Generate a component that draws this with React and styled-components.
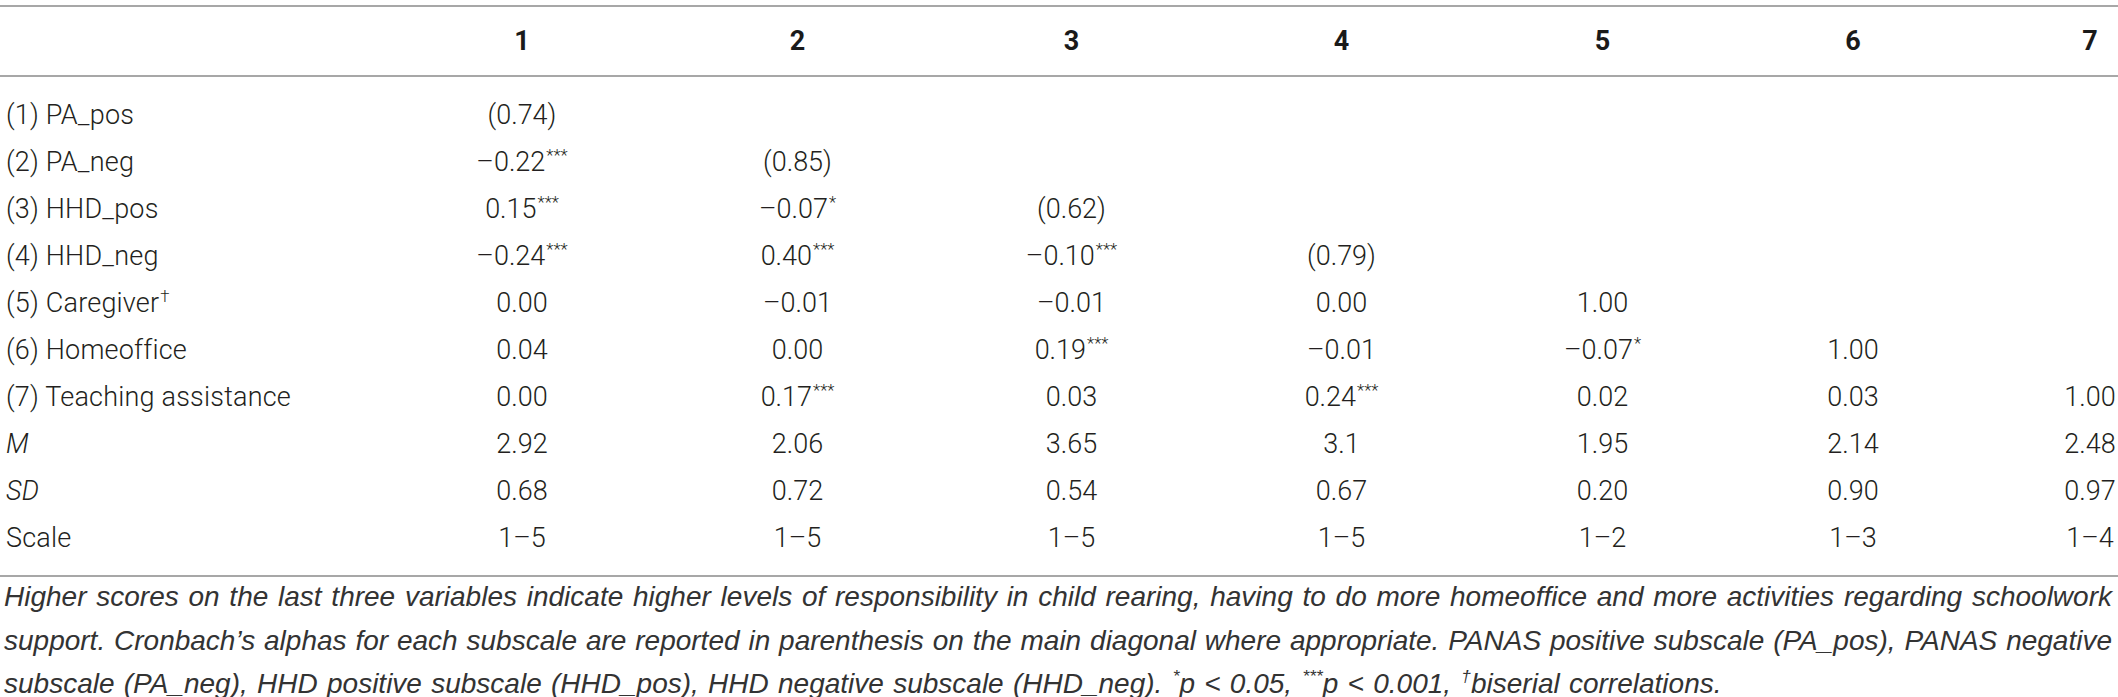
import React from 'react';
import styled, { createGlobalStyle } from 'styled-components';

const GlobalStyle = createGlobalStyle`
  html, body {
    margin: 0;
    padding: 0;
    background: #fff;
  }
  body {
    font-family: Roboto, "Liberation Sans", Arial, sans-serif;
    color: #231f20;
  }
`;

const widths = [384, 276, 275, 273, 267, 255, 246, 142];

const rows = [
  ['(1) PA_pos', ['(0.74)']],
  ['(2) PA_neg', ['–0.22***', '(0.85)']],
  ['(3) HHD_pos', ['0.15***', '–0.07*', '(0.62)']],
  ['(4) HHD_neg', ['–0.24***', '0.40***', '–0.10***', '(0.79)']],
  ['(5) Caregiver†', ['0.00', '–0.01', '–0.01', '0.00', '1.00']],
  ['(6) Homeoffice', ['0.04', '0.00', '0.19***', '–0.01', '–0.07*', '1.00']],
  ['(7) Teaching assistance', ['0.00', '0.17***', '0.03', '0.24***', '0.02', '0.03', '1.00']],
  ['M', ['2.92', '2.06', '3.65', '3.1', '1.95', '2.14', '2.48'], true],
  ['SD', ['0.68', '0.72', '0.54', '0.67', '0.20', '0.90', '0.97'], true],
  ['Scale', ['1–5', '1–5', '1–5', '1–5', '1–2', '1–3', '1–4']],
];

const Page = styled.div`
  width: 2118px;
  padding-top: 5px;
  overflow: hidden;
`;

const Table = styled.table`
  width: 2118px;
  table-layout: fixed;
  border-collapse: collapse;
  border-top: 2px solid #a7a7a7;
  border-bottom: 2px solid #a7a7a7;
  font-size: 27px;
`;

const HeadCell = styled.th`
  height: 68px;
  padding: 0 0 0 ${(p) => (p.$last ? '86px' : '0')};
  text-align: center;
  font-weight: 700;
  font-size: 27px;
  color: #1a1a1a;
  border-bottom: 2px solid #a7a7a7;
`;

const Row = styled.tr`
  &:first-child td {
    padding-top: 15px;
  }
  &:last-child td {
    padding-bottom: 13px;
  }
`;

const Label = styled.td`
  padding: 0 0 0 6px;
  line-height: 47px;
  text-align: left;
  font-weight: 300;
  letter-spacing: 0.2px;
  white-space: nowrap;
  font-style: ${(p) => (p.$italic ? 'italic' : 'normal')};
`;

const Value = styled.td`
  padding: 0 0 0 ${(p) => (p.$last ? '86px' : '0')};
  line-height: 47px;
  text-align: center;
  font-weight: 300;
  white-space: nowrap;
`;

const Sup = styled.sup`
  font-size: 0.62em;
  line-height: 0;
  vertical-align: 0;
  position: relative;
  top: -0.62em;
  margin-left: 1px;
`;

const Note = styled.div`
  margin-top: -2px;
  padding: 0 6px 0 4px;
  font-family: "Liberation Sans", Arial, sans-serif;
  font-size: 28px;
  font-style: italic;
  line-height: 43.5px;
  color: #333;
`;

const NoteLine = styled.div`
  white-space: nowrap;
  text-align: left;
  text-align-last: ${(p) => (p.$justify ? 'justify' : 'left')};
  word-spacing: ${(p) => (p.$justify ? '0' : '1.5px')};
`;

const Cell = ({ text }) => {
  const m = text.match(/^(.*?)(\*+|†)$/);
  if (!m) return text;
  return (
    <>
      {m[1]}
      <Sup>{m[2]}</Sup>
    </>
  );
};

export default function App() {
  return (
    <Page>
      <GlobalStyle />
      <Table>
        <colgroup>
          {widths.map((w, i) => (
            <col key={i} style={{ width: w }} />
          ))}
        </colgroup>
        <thead>
          <tr>
            <HeadCell />
            {[1, 2, 3, 4, 5, 6, 7].map((n) => (
              <HeadCell key={n} $last={n === 7}>
                {n}
              </HeadCell>
            ))}
          </tr>
        </thead>
        <tbody>
          {rows.map(([label, vals, italic]) => (
            <Row key={label}>
              <Label $italic={italic}>
                <Cell text={label} />
              </Label>
              {Array.from({ length: 7 }).map((_, i) => (
                <Value key={i} $last={i === 6}>
                  {vals[i] ? <Cell text={vals[i]} /> : null}
                </Value>
              ))}
            </Row>
          ))}
        </tbody>
      </Table>
      <Note>
        <NoteLine $justify>
          Higher scores on the last three variables indicate higher levels of responsibility in child rearing, having to do more homeoffice and more activities regarding schoolwork
        </NoteLine>
        <NoteLine $justify>
          support. Cronbach’s alphas for each subscale are reported in parenthesis on the main diagonal where appropriate. PANAS positive subscale (PA_pos), PANAS negative
        </NoteLine>
        <NoteLine>
          subscale (PA_neg), HHD positive subscale (HHD_pos), HHD negative subscale (HHD_neg). <Sup>*</Sup>p &lt; 0.05, <Sup>***</Sup>p &lt; 0.001, <Sup>†</Sup>biserial correlations.
        </NoteLine>
      </Note>
    </Page>
  );
}
